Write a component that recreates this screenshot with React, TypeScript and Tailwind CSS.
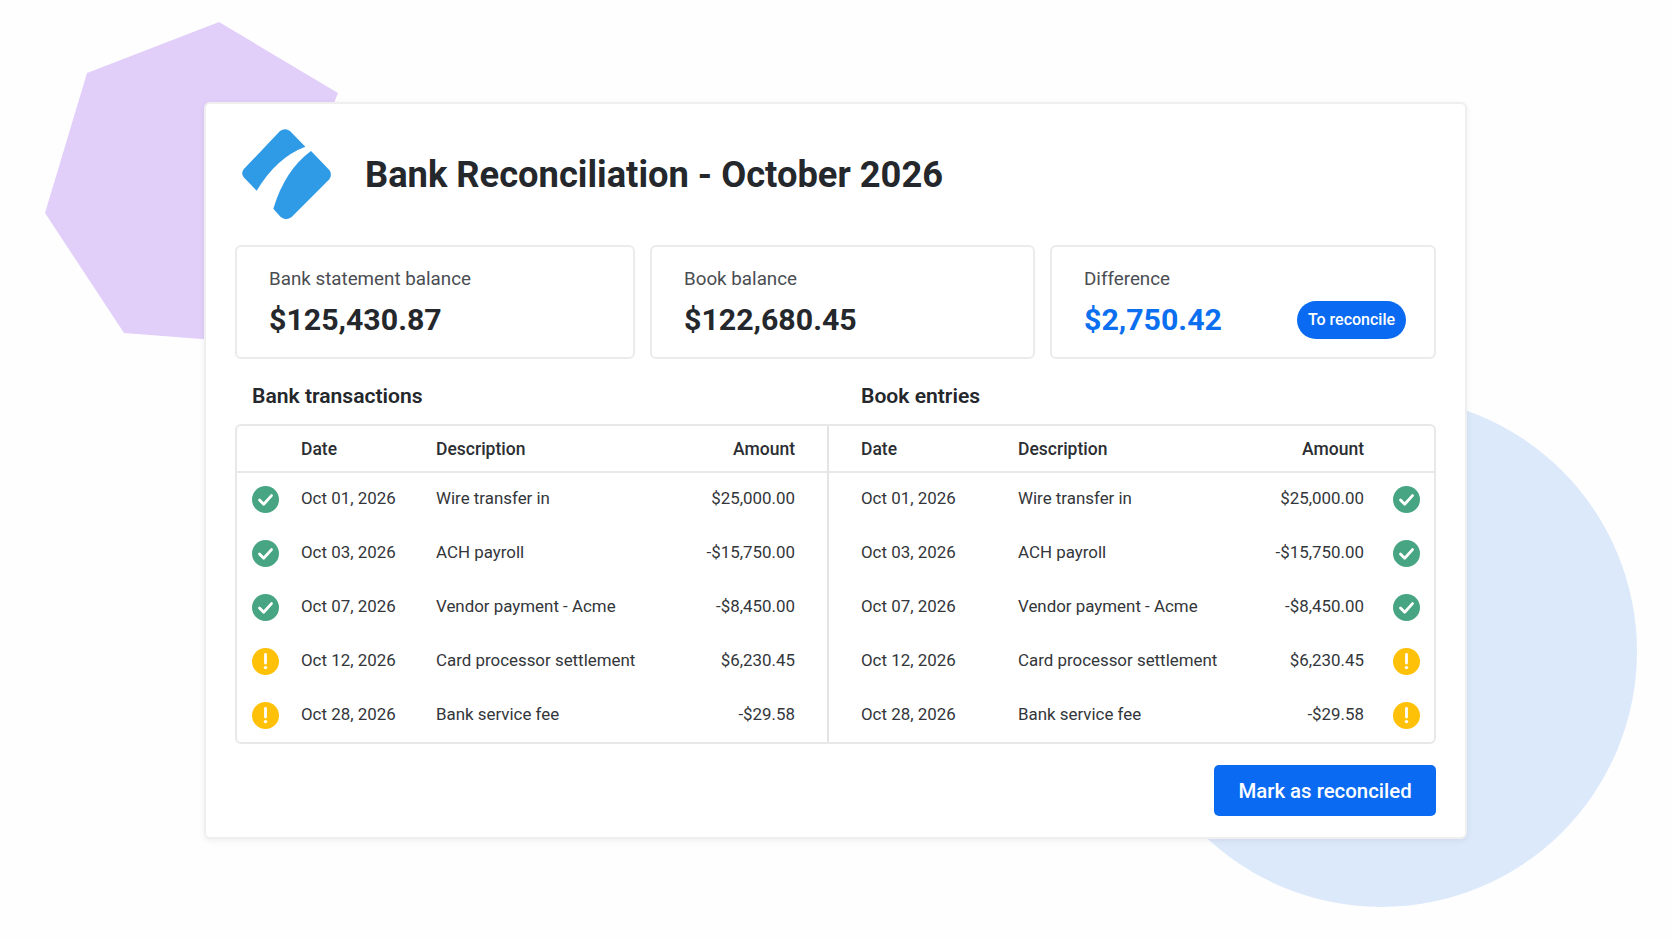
import React from "react"

const rows = [
  { date: "Oct 01, 2026", desc: "Wire transfer in", amount: "$25,000.00", ok: true },
  { date: "Oct 03, 2026", desc: "ACH payroll", amount: "-$15,750.00", ok: true },
  { date: "Oct 07, 2026", desc: "Vendor payment - Acme", amount: "-$8,450.00", ok: true },
  { date: "Oct 12, 2026", desc: "Card processor settlement", amount: "$6,230.45", ok: false },
  { date: "Oct 28, 2026", desc: "Bank service fee", amount: "-$29.58", ok: false },
]

function StatusIcon({ ok }: { ok: boolean }) {
  if (ok) {
    return (
      <svg width="27" height="27" viewBox="0 0 27 27">
        <circle cx="13.5" cy="13.5" r="13.5" fill="#47a583" />
        <path d="M7.5 14l4.2 4.2 7.8-8.6" fill="none" stroke="#fff" strokeWidth="2.8" strokeLinecap="round" strokeLinejoin="round" />
      </svg>
    )
  }
  return (
    <svg width="27" height="27" viewBox="0 0 27 27">
      <circle cx="13.5" cy="13.5" r="13.5" fill="#ffc107" />
      <path d="M13.5 6.5v8.5" fill="none" stroke="#fff" strokeWidth="2.8" strokeLinecap="round" />
      <circle cx="13.5" cy="19.6" r="1.7" fill="#fff" />
    </svg>
  )
}

function Logo() {
  return (
    <svg width="120" height="110" viewBox="0 0 360 330" className="-ml-[5px] shrink-0">
      <path d="M150 33Q165 22 180 33L226 80Q140 112 80 212L41 172Q32 160 41 148Z" fill="#2f9ae6" />
      <path d="M243 93L298 150Q308 163 298 178L185 291Q168 304 152 291L130 266Q165 150 243 93Z" fill="#2f9ae6" />
    </svg>
  )
}

function Stat({ label, value, blue, pill }: { label: string; value: string; blue?: boolean; pill?: string }) {
  return (
    <div className="h-[114px] rounded-[6px] border-2 border-[#ebebeb] pl-[32px] pr-[28px] pt-[18px]">
      <div className="text-[18.8px] leading-[28px] text-[#4a4d52]">{label}</div>
      <div className="mt-[7px] flex items-center justify-between">
        <span className={`text-[30.3px] font-bold leading-[40px] ${blue ? "text-[#0b6ff0]" : "text-[#24272b]"}`}>{value}</span>
        {pill && (
          <span className="flex h-[38px] w-[109px] items-center justify-center rounded-full bg-[#0a6bf2] text-[16px] font-medium text-white">
            {pill}
          </span>
        )}
      </div>
    </div>
  )
}

export default function App() {
  return (
    <div className="relative h-[941px] w-[1672px] overflow-hidden bg-[#fefefe] pl-[204px] pt-[102px] font-['Roboto',sans-serif]">
      {/* Background shapes */}
      <svg className="absolute left-0 top-0" width="400" height="400">
        <polygon points="219,22 87,73 45,213 124,333 240,342 338,93" fill="#e1cffa" />
      </svg>
      <div className="absolute left-[1126px] top-[396px] h-[511px] w-[511px] rounded-full bg-[#dce9fb]" />

      <div className="relative h-[737px] w-[1263px] rounded-[6px] border-2 border-[#efefef] bg-white px-[29px] pt-[16px] shadow-[0_2px_6px_rgba(0,0,0,0.06)]">
        <div className="flex h-[110px] items-center gap-[15px]">
          <Logo />
          <h1 className="text-[36.3px] font-bold leading-none text-[#24272b]">Bank Reconciliation - October 2026</h1>
        </div>

        <div className="mt-[15px] grid grid-cols-[400px_385px_386px] gap-x-[15px]">
          <Stat label="Bank statement balance" value="$125,430.87" />
          <Stat label="Book balance" value="$122,680.45" />
          <Stat label="Difference" value="$2,750.42" blue pill="To reconcile" />
        </div>

        <div className="mt-[23px] flex h-[28px] items-center text-[21.1px] font-semibold text-[#24272b]">
          <div className="w-[626px] pl-[17px]">Bank transactions</div>
          <div>Book entries</div>
        </div>

        <div className="mt-[14px] flex h-[320px] w-[1201px] rounded-[6px] border-2 border-[#e8e8e8] text-[#33363a]">
          {/* Bank side */}
          <div className="w-[592px] border-r-2 border-[#e4e4e4]">
            <div className="grid h-[47px] grid-cols-[64px_135px_1fr_auto] items-center border-b-2 border-[#e8e8e8] pr-[32px] pt-[2px] text-[17.5px] font-medium text-[#2b2e32]">
              <span />
              <span>Date</span>
              <span>Description</span>
              <span>Amount</span>
            </div>
            {rows.map((r) => (
              <div key={r.date} className="grid h-[54px] grid-cols-[64px_135px_1fr_auto] items-center pb-[2px] pr-[32px] text-[16.9px]">
                <span className="flex justify-center pr-[7px]">
                  <StatusIcon ok={r.ok} />
                </span>
                <span>{r.date}</span>
                <span>{r.desc}</span>
                <span>{r.amount}</span>
              </div>
            ))}
          </div>

          {/* Book side */}
          <div className="flex-1">
            <div className="grid h-[47px] grid-cols-[32px_157px_1fr_auto_70px] items-center border-b-2 border-[#e8e8e8] pt-[2px] text-[17.5px] font-medium text-[#2b2e32]">
              <span />
              <span>Date</span>
              <span>Description</span>
              <span>Amount</span>
              <span />
            </div>
            {rows.map((r) => (
              <div key={r.date} className="grid h-[54px] grid-cols-[32px_157px_1fr_auto_70px] items-center pb-[2px] text-[16.9px]">
                <span />
                <span>{r.date}</span>
                <span>{r.desc}</span>
                <span>{r.amount}</span>
                <span className="flex justify-end pr-[14px]">
                  <StatusIcon ok={r.ok} />
                </span>
              </div>
            ))}
          </div>
        </div>

        <div className="mt-[21px] flex justify-end">
          <button className="h-[51px] w-[222px] rounded-[5px] bg-[#0a6bf2] pt-[2px] text-[20.4px] font-medium text-white">Mark as reconciled</button>
        </div>
      </div>
    </div>
  )
}
